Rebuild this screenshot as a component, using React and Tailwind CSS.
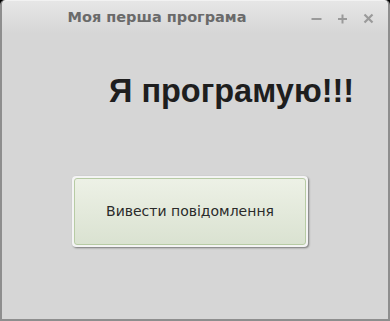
import React from 'react';

// Window control glyphs for the title bar
const Controls = () => (
  <div className="flex items-center gap-[15px] text-[#9a9a9a]">
    <svg width="11" height="11" viewBox="0 0 11 11">
      <rect x="0.5" y="5" width="10" height="2" fill="currentColor" />
    </svg>
    <svg width="11" height="11" viewBox="0 0 11 11">
      <rect x="1" y="5" width="9" height="2" fill="currentColor" />
      <rect x="4.5" y="1.5" width="2" height="9" fill="currentColor" />
    </svg>
    <svg width="11" height="11" viewBox="0 0 11 11">
      <path d="M1.5 1.5 L9.5 9.5 M9.5 1.5 L1.5 9.5" stroke="currentColor" strokeWidth="2.2" />
    </svg>
  </div>
);

export default function App() {
  return (
    <div className="w-[390px] h-[321px] bg-black">
      <div
        className="w-full h-full flex flex-col rounded-t-[5px] bg-[#d6d6d6] border-x-2 border-b-2 border-[#8e8e8e]"
        style={{ fontFamily: '"DejaVu Sans", sans-serif' }}
      >
        {/* Title bar */}
        <div className="h-[34px] flex items-center rounded-t-[5px] border-t border-[#f2f2f2] bg-gradient-to-b from-[#e6e6e6] to-[#d6d6d6] pl-[60px] pr-[14px]">
          <span className="text-[14.5px] font-bold text-[#6a6a6a] w-[190px] text-center">Моя перша програма</span>
          <div className="ml-auto pt-[1px]">
            <Controls />
          </div>
        </div>

        {/* Content */}
        <div className="flex-1 flex flex-col">
          <h1
            className="mt-[41px] ml-[107px] text-[32.5px] font-bold leading-none text-[#1e1e1e]"
            style={{ fontFamily: '"Liberation Sans", Arial, sans-serif' }}
          >
            Я програмую!!!
          </h1>
          <div className="mt-[68px] ml-[70px]">
            <button className="w-[236px] h-[71px] rounded-[4px] bg-[#f4f4f4] p-[2px] shadow-[1px_1px_2px_rgba(0,0,0,0.45)]">
              <div className="w-full h-full rounded-[3px] border border-[#b7cba4] bg-gradient-to-b from-[#edf1e6] to-[#dae2d1] flex items-center justify-center">
                <span className="text-[14px] text-[#2a2a2a]">Вивести повідомлення</span>
              </div>
            </button>
          </div>
        </div>
      </div>
    </div>
  );
}
